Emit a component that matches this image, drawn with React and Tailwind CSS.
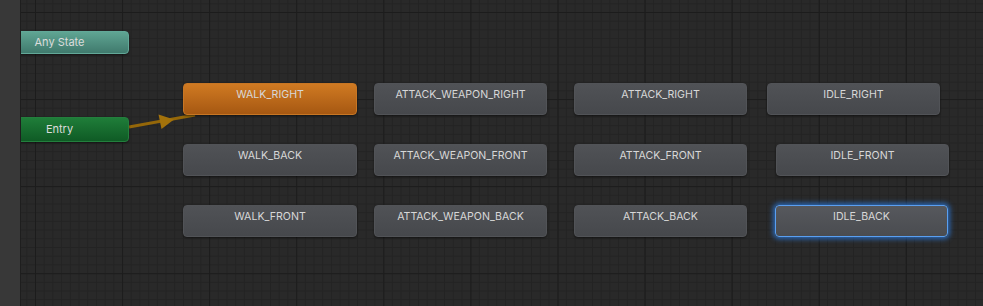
import React from 'react'

const states = [
  { name: 'WALK_RIGHT', x: 183, y: 83, w: 174, kind: 'orange' },
  { name: 'ATTACK_WEAPON_RIGHT', x: 374, y: 83, w: 173 },
  { name: 'ATTACK_RIGHT', x: 574, y: 83, w: 173 },
  { name: 'IDLE_RIGHT', x: 767, y: 83, w: 173 },
  { name: 'WALK_BACK', x: 183, y: 144, w: 174 },
  { name: 'ATTACK_WEAPON_FRONT', x: 374, y: 144, w: 173 },
  { name: 'ATTACK_FRONT', x: 574, y: 144, w: 173 },
  { name: 'IDLE_FRONT', x: 776, y: 144, w: 173 },
  { name: 'WALK_FRONT', x: 183, y: 205, w: 174 },
  { name: 'ATTACK_WEAPON_BACK', x: 374, y: 205, w: 173 },
  { name: 'ATTACK_BACK', x: 574, y: 205, w: 173 },
  { name: 'IDLE_BACK', x: 775, y: 205, w: 173, kind: 'selected' },
]

function StateNode({ name, x, y, w, kind }) {
  let look = 'bg-linear-to-b from-[#505256] to-[#46484c] border border-[#515357] shadow-[0_1px_2px_rgba(0,0,0,0.5)]'
  if (kind === 'orange') look = 'bg-linear-to-b from-[#d07a22] to-[#a65812] border border-[#c77624] shadow-[0_1px_2px_rgba(0,0,0,0.5)]'
  if (kind === 'selected') look = 'bg-linear-to-b from-[#56585d] to-[#4a4c50] border border-[#5a9ff0] shadow-[0_0_5px_2px_rgba(45,115,205,0.85)]'
  return (
    <div
      className={`absolute h-[32px] rounded-[4px] flex justify-center pt-[4px] text-[10.6px] leading-[14px] text-[#d8d8d8] ${look}`}
      style={{ left: x, top: y, width: w }}
    >
      {name}
    </div>
  )
}

export default function App() {
  return (
    <div
      className="relative w-[983px] h-[306px] overflow-hidden bg-[#292929] font-['Inter','Liberation_Sans',sans-serif] bg-[linear-gradient(to_right,#1c1c1c_1px,transparent_1px),linear-gradient(to_bottom,#1c1c1c_1px,transparent_1px),linear-gradient(to_right,#232323_1px,transparent_1px),linear-gradient(to_bottom,#232323_1px,transparent_1px)] bg-[size:87.1px_87.1px,87.1px_87.1px,8.71px_8.71px,8.71px_8.71px] bg-[position:35px_12px]"
    >
      {/* transition Entry -> WALK_RIGHT */}
      <svg className="absolute left-0 top-0" width="983" height="306">
        <line x1="129" y1="127" x2="195" y2="115" stroke="#946709" strokeWidth="3" />
        <polygon points="158.5,114.5 161.5,129 174,119.5" fill="#a3720b" />
      </svg>

      {/* Any State / Entry */}
      <div className="absolute left-0 top-[31px] w-[129px] h-[23px] rounded-[4px] bg-linear-to-b from-[#5fa593] to-[#407a6d] border border-[#62a898] shadow-[0_1px_2px_rgba(0,0,0,0.5)] flex items-center justify-center pr-[10px] text-[11px] text-[#dcdcdc]">
        Any State
      </div>
      <div className="absolute left-0 top-[117px] w-[129px] h-[25px] rounded-[4px] bg-linear-to-b from-[#1f7d39] to-[#0f5b25] border border-[#237f3d] shadow-[0_1px_2px_rgba(0,0,0,0.5)] flex items-center justify-center pr-[10px] text-[11px] text-[#dcdcdc]">
        Entry
      </div>

      {states.map((s) => (
        <StateNode key={s.name} {...s} />
      ))}

      {/* left side panel */}
      <div className="absolute left-0 top-0 h-full w-[21px] bg-[#383838] border-r border-[#1e1e1e]" />
    </div>
  )
}
